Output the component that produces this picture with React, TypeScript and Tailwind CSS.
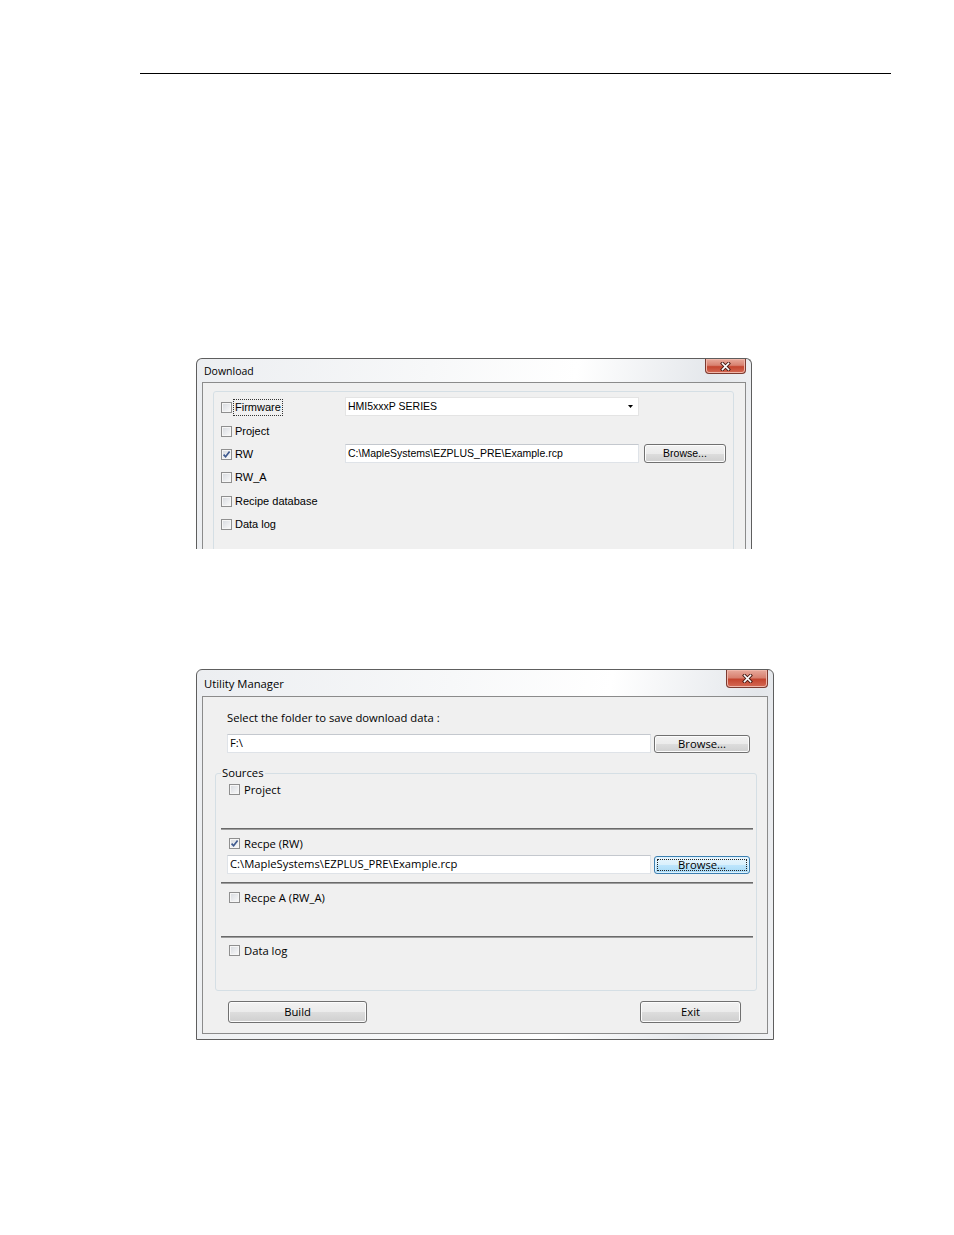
import type { ReactNode } from 'react';

const btnBg =
  'bg-[linear-gradient(to_bottom,#f2f2f2_0%,#ebebeb_50%,#dddddd_50%,#cfcfcf_100%)] border border-[#707070] rounded-[3px] shadow-[inset_0_0_0_1px_#fcfcfc]';

function Checkbox({ checked = false }: { checked?: boolean }) {
  return (
    <span className="relative inline-flex h-[11px] w-[11px] shrink-0 items-center justify-center border border-[#8f8f8f] bg-[linear-gradient(135deg,#d6d9de,#fbfbfb)] shadow-[inset_0_0_0_1px_#f6f6f6]">
      {checked && (
        <svg width="9" height="9" viewBox="0 0 9 9" className="block">
          <path d="M1.6 4.6 L3.6 6.8 L7.6 1.6" fill="none" stroke="#3f5a8f" strokeWidth="1.7" />
        </svg>
      )}
    </span>
  );
}

function CloseButton({ w, h }: { w: string; h: string }) {
  return (
    <div
      className={`${w} ${h} flex items-center justify-center rounded-b-[4px] border border-t-0 border-[#7b3a30] bg-[linear-gradient(to_bottom,#e8aa9c_0%,#d88170_45%,#c4452f_55%,#d46a55_100%)] shadow-[inset_0_0_0_1px_#f0b7aa]`}
    >
      <svg width="11" height="9" viewBox="0 0 11 9" className="block">
        <path d="M2.5 1.5 L8.5 7.5 M8.5 1.5 L2.5 7.5" stroke="#4a1d16" strokeWidth="3.4" strokeLinecap="square" />
        <path d="M2.5 1.5 L8.5 7.5 M8.5 1.5 L2.5 7.5" stroke="#ffffff" strokeWidth="1.6" strokeLinecap="square" />
      </svg>
    </div>
  );
}

function TextBox({ className, children }: { className: string; children: ReactNode }) {
  return (
    <div
      className={`${className} flex items-center overflow-hidden whitespace-nowrap border border-[#dfe3e8] border-t-[#c4c8ce] bg-white pl-[2px]`}
    >
      {children}
    </div>
  );
}

function Download() {
  const rows: { label: string; checked?: boolean; focus?: boolean; extra?: ReactNode }[] = [
    {
      label: 'Firmware',
      focus: true,
      extra: (
        <div className="flex h-[19px] w-[294px] items-center justify-between border border-[#e4e4e4] bg-white pl-[2px] pr-[5px] text-[10.5px]">
          <span>HMI5xxxP SERIES</span>
          <svg width="5" height="3" viewBox="0 0 5 3" className="block">
            <path d="M0 0 H5 L2.5 3 Z" fill="#000" />
          </svg>
        </div>
      ),
    },
    { label: 'Project' },
    {
      label: 'RW',
      checked: true,
      extra: (
        <div className="flex items-center">
          <TextBox className="h-[19px] w-[294px] text-[10.5px]">C:\MapleSystems\EZPLUS_PRE\Example.rcp</TextBox>
          <div className={`${btnBg} ml-[5px] flex h-[19px] w-[82px] items-center justify-center text-[10.5px]`}>
            Browse...
          </div>
        </div>
      ),
    },
    { label: 'RW_A' },
    { label: 'Recipe database' },
    { label: 'Data log' },
  ];

  return (
    <div className="ml-[196px] mt-[284px] h-[191px] w-[556px] overflow-hidden rounded-t-[6px] border border-b-0 border-[#5e5e5e] bg-[linear-gradient(100deg,#eceef1_0%,#f7f8f9_40%,#ffffff_65%,#e4e7eb_88%,#f1f2f4_100%)] font-['Liberation_Sans',Arial,sans-serif] text-black">
      <div className="flex h-[23px] items-start justify-between pl-[7px] pr-[5px]">
        <span className="self-center font-['Open_Sans',sans-serif] text-[10.5px] leading-[14px]">Download</span>
        <CloseButton w="w-[41px]" h="h-[15px]" />
      </div>
      <div className="mx-[5px] h-[300px] border border-[#8b8b8b] bg-[#f0f0f0] pt-[8px]">
        <div className="ml-[10px] mr-[11px] h-[280px] rounded-[3px] border border-[#d5dfe5] pl-[7px] pt-[4px] text-[11px]">
          {rows.map((r) => (
            <div key={r.label} className="flex h-[23.4px] items-center">
              <div className="flex w-[124px] items-center gap-[3px]">
                <Checkbox checked={r.checked} />
                <span
                  className={`leading-[13px] ${r.focus ? 'outline outline-dotted outline-[#333] outline-offset-[1px]' : ''}`}
                >
                  {r.label}
                </span>
              </div>
              <div className="-mt-[2px]">{r.extra}</div>
            </div>
          ))}
        </div>
      </div>
    </div>
  );
}

function Row({ label, checked = false }: { label: string; checked?: boolean }) {
  return (
    <div className="flex h-[19px] items-center gap-[4px] pl-[13px]">
      <Checkbox checked={checked} />
      <span className="leading-[15px]">{label}</span>
    </div>
  );
}

function Separator({ className }: { className: string }) {
  return <div className={`${className} ml-[5px] mr-[3px] h-[2px] border-t border-[#6a6a6a] bg-[#9d9d9d]`} />;
}

function UtilityManager() {
  return (
    <div className="ml-[196px] mt-[120px] w-[578px] rounded-t-[6px] border border-[#5e5e5e] bg-[linear-gradient(100deg,#eceef1_0%,#f7f8f9_40%,#ffffff_65%,#e4e7eb_88%,#f1f2f4_100%)] pb-[5px] font-['Open_Sans',sans-serif] text-[11.25px] text-black">
      <div className="flex h-[26px] items-start justify-between pl-[7px] pr-[5px]">
        <span className="self-center leading-[15px]">Utility Manager</span>
        <CloseButton w="w-[42px]" h="h-[18px]" />
      </div>
      <div className="mx-[5px] border border-[#8b8b8b] bg-[#f0f0f0] pb-[10px] pt-[13px]">
        <div className="ml-[24px] h-[15px] leading-[15px]">Select the folder to save download data :</div>
        <div className="ml-[24px] mt-[9px] flex items-start">
          <TextBox className="h-[19px] w-[424px]">F:\</TextBox>
          <div className={`${btnBg} ml-[3px] mt-[1px] flex h-[18px] w-[96px] items-center justify-center`}>
            Browse...
          </div>
        </div>
        <fieldset className="ml-[12px] mr-[10px] mt-[13px] rounded-[3px] border border-[#d5dfe5] pb-[30px]">
          <legend className="ml-[5px] px-[1px] leading-[14px]">Sources</legend>
          <Row label="Project" />
          <Separator className="mt-[29px]" />
          <div className="mt-[4px]">
            <Row label="Recpe (RW)" checked />
          </div>
          <div className="ml-[11px] mt-[2px] flex items-start">
            <TextBox className="h-[19px] w-[424px]">C:\MapleSystems\EZPLUS_PRE\Example.rcp</TextBox>
            <div className="ml-[3px] mt-[1px] flex h-[18px] w-[96px] items-center justify-center rounded-[3px] border border-[#3c7fb1] bg-[linear-gradient(to_bottom,#eaf6fd_0%,#d9f0fc_50%,#bee6fd_50%,#a7d9f5_100%)] p-[2px] shadow-[inset_0_0_0_1px_#dcf1fd]">
              <div className="flex h-full w-full items-center justify-center border border-dotted border-[#222]">
                Browse...
              </div>
            </div>
          </div>
          <Separator className="mt-[8px]" />
          <div className="mt-[4px]">
            <Row label="Recpe A (RW_A)" />
          </div>
          <Separator className="mt-[29px]" />
          <div className="mt-[3px]">
            <Row label="Data log" />
          </div>
        </fieldset>
        <div className="mt-[10px] flex justify-between pl-[25px] pr-[26px]">
          <div className={`${btnBg} flex h-[22px] w-[139px] items-center justify-center`}>Build</div>
          <div className={`${btnBg} flex h-[22px] w-[101px] items-center justify-center`}>Exit</div>
        </div>
      </div>
    </div>
  );
}

export default function App() {
  return (
    <div className="min-h-[1235px] w-[954px] overflow-hidden bg-white pt-[73px]">
      <div className="ml-[140px] h-px w-[751px] bg-black" />
      <Download />
      <UtilityManager />
    </div>
  );
}
